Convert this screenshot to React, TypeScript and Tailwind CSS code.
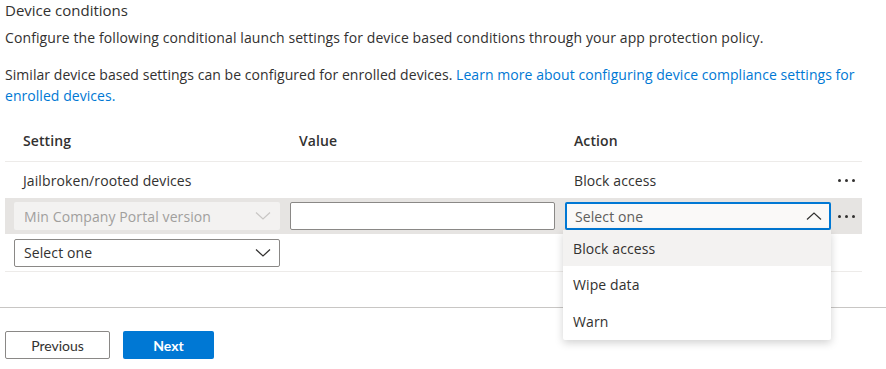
import React from "react";

const Chevron = ({ up = false, color = "#323130" }: { up?: boolean; color?: string }) => (
  <svg width="16" height="8" viewBox="0 0 16 8" className="shrink-0">
    <polyline
      points={up ? "1,7.5 8,1 15,7.5" : "1,0.5 8,7 15,0.5"}
      fill="none"
      stroke={color}
      strokeWidth="1.2"
    />
  </svg>
);

const Dots = () => (
  <div className="flex items-center gap-[4px]">
    <span className="block w-[3px] h-[3px] rounded-full bg-[#323130]" />
    <span className="block w-[3px] h-[3px] rounded-full bg-[#323130]" />
    <span className="block w-[3px] h-[3px] rounded-full bg-[#323130]" />
  </div>
);

export default function App() {
  return (
    <div
      className="w-[886px] h-[369px] bg-white text-[#323130] overflow-hidden tracking-[0.1px]"
      style={{ fontFamily: "'Segoe UI', 'Open Sans', sans-serif" }}
    >
      <div className="px-[5px]">
        <div className="text-[15px] leading-[20px] tracking-normal">Device conditions</div>
        <div className="mt-[8px] text-[14px] leading-[20px]">
          Configure the following conditional launch settings for device based conditions through your app protection policy.
        </div>
        <div className="mt-[16px] text-[14px] leading-[21px] tracking-[0.05px]">
          Similar device based settings can be configured for enrolled devices.{" "}
          <a className="text-[#0078d4]">
            Learn more about configuring device compliance settings for enrolled devices.
          </a>
        </div>

        {/* table */}
        <div className="mt-[14px] w-[857px] text-[14px]">
          <div className="h-[42px] flex items-center border-b border-[#edebe9] font-semibold">
            <div className="w-[285px] pl-[18px]">Setting</div>
            <div className="w-[275px] pl-[9px]">Value</div>
            <div className="pl-[9px]">Action</div>
          </div>
          <div className="h-[36px] flex items-center">
            <div className="w-[285px] pl-[18px]">Jailbroken/rooted devices</div>
            <div className="w-[275px]" />
            <div className="w-[266px] pl-[9px]">Block access</div>
            <div className="flex-1 flex justify-center">
              <Dots />
            </div>
          </div>
          <div className="h-[36px] flex items-center bg-[#e6e4e2]">
            <div className="w-[285px] pl-[9px]">
              <div className="h-[28px] w-[266px] rounded-[2px] bg-[#f3f2f1] flex items-center justify-between pl-[10px] pr-[9px] text-[#a19f9d]">
                <span>Min Company Portal version</span>
                <Chevron color="#c8c6c4" />
              </div>
            </div>
            <div className="w-[275px]">
              <div className="h-[28px] w-[265px] rounded-[2px] bg-white border border-[#8a8886]" />
            </div>
            <div className="w-[266px] relative">
              <div className="h-[28px] w-[266px] rounded-[2px] bg-[#faf9f8] border-2 border-[#0078d4] flex items-center justify-between pl-[8px] pr-[7px] text-[#605e5c]">
                <span>Select one</span>
                <Chevron up />
              </div>
              <div className="absolute left-[-2px] top-[28px] w-[268px] bg-white rounded-[2px] shadow-[0_3px_8px_rgba(0,0,0,0.18)] z-10 text-[#323130]">
                <div className="h-[36px] flex items-center pl-[10px] bg-[#f3f2f1]">Block access</div>
                <div className="h-[37px] flex items-center pl-[10px]">Wipe data</div>
                <div className="h-[37px] flex items-center pl-[10px]">Warn</div>
              </div>
            </div>
            <div className="flex-1 flex justify-center">
              <Dots />
            </div>
          </div>
          <div className="h-[38px] flex items-center border-b border-[#edebe9]">
            <div className="w-[285px] pl-[9px]">
              <div className="h-[28px] w-[266px] rounded-[2px] bg-white border border-[#8a8886] flex items-center justify-between pl-[9px] pr-[8px]">
                <span>Select one</span>
                <Chevron />
              </div>
            </div>
          </div>
        </div>
      </div>

      <div className="mt-[35px] border-t border-[#c8c6c4]" />

      <div
        className="mt-[23px] px-[5px] flex gap-[13px] text-[14px] tracking-normal"
        style={{ fontFamily: "Lato, sans-serif" }}
      >
        <button className="h-[28px] w-[105px] rounded-[2px] border border-[#8a8886] bg-white text-[#323130]">
          Previous
        </button>
        <button className="h-[28px] w-[91px] rounded-[2px] bg-[#0078d4] text-white font-bold">
          Next
        </button>
      </div>
    </div>
  );
}
